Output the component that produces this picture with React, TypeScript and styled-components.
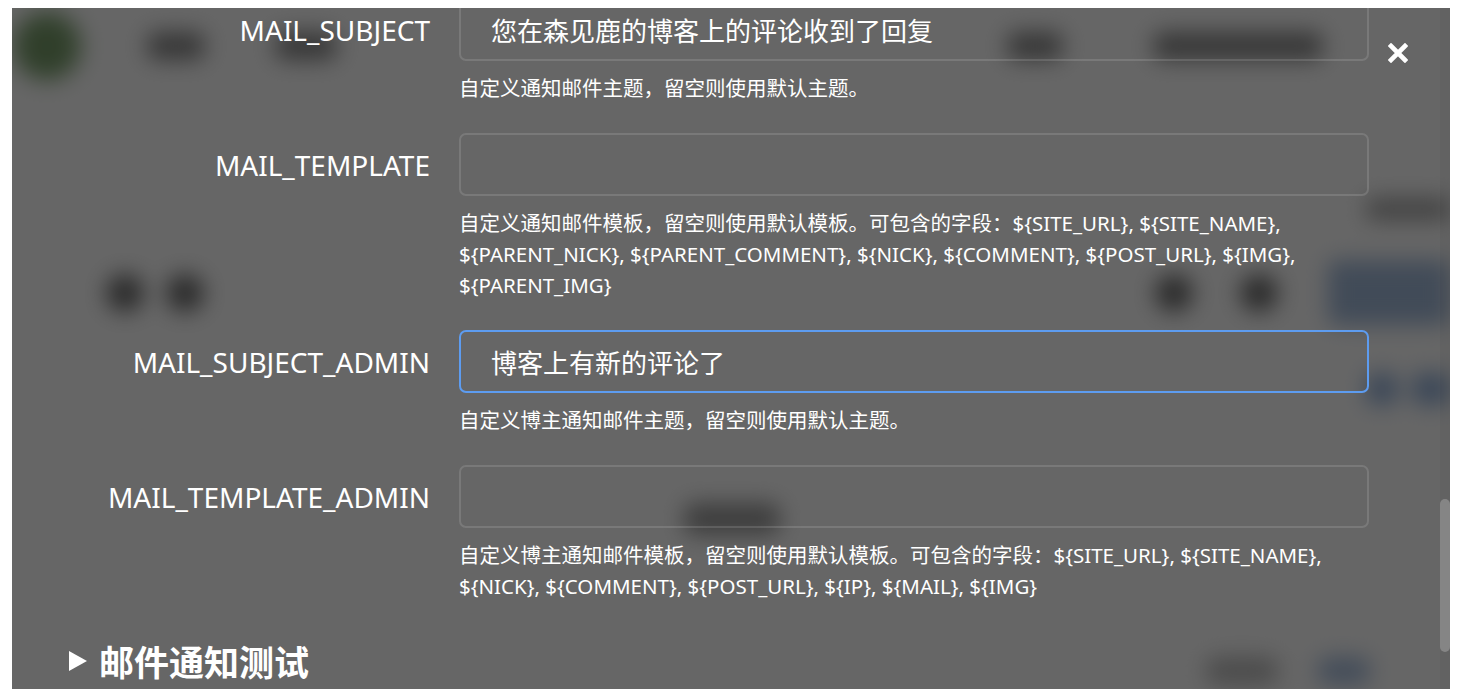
import React from "react";
import styled, { createGlobalStyle } from "styled-components";

const GlobalStyle = createGlobalStyle`
  html, body { margin: 0; padding: 0; background: #ffffff; }
  body { font-family: "Noto Sans", "Noto Sans CJK SC", sans-serif; }
  * { box-sizing: border-box; }
`;

const Frame = styled.div`
  position: relative;
  margin: 8px 0 0 12px;
  width: 1438px;
  height: 681px;
  overflow: hidden;
  background: #ffffff;
`;

/* ---------- blurred page behind the modal ---------- */
const BgPage = styled.div`
  height: 100%;
  display: flex;
  flex-direction: column;
  filter: blur(11px);
  color: #2a2a2a;
`;

const BgHeader = styled.header`
  display: flex;
  align-items: center;
  height: 76px;
  padding-left: 0;
`;

const Avatar = styled.div`
  width: 70px;
  height: 70px;
  border-radius: 50%;
  background: radial-gradient(circle at 50% 50%, #6f9560, #86a97a 65%, #a9c59e);
  flex: none;
`;

const NavItem = styled.span<{ $ml: number; $w: number }>`
  margin-left: ${(p) => p.$ml}px;
  width: ${(p) => p.$w}px;
  height: 28px;
  border-radius: 10px;
  background: #8a8a8a;
  flex: none;
`;

const MetaLine = styled.div`
  margin-top: 114px;
  align-self: flex-end;
  width: 84px;
  height: 22px;
  border-radius: 8px;
  background: #a6a6a6;
`;

const Toolbar = styled.div`
  display: flex;
  align-items: center;
  margin-top: 40px;
  height: 65px;
`;

const Dot = styled.span<{ $ml: number }>`
  margin-left: ${(p) => p.$ml}px;
  width: 38px;
  height: 38px;
  border-radius: 50%;
  background: #6e6e6e;
  flex: none;
`;

const Grow = styled.span`
  flex: 1;
`;

const BlueButton = styled.span`
  width: 122px;
  height: 65px;
  margin-left: 50px;
  border-radius: 8px;
  background: #a4bcdc;
`;

const LinkRow = styled.div`
  margin-top: 48px;
  align-self: flex-end;
  display: flex;
  gap: 14px;
`;

const BlueBlob = styled.span<{ $w: number }>`
  width: ${(p) => p.$w}px;
  height: 32px;
  border-radius: 10px;
  background: #95b3dc;
`;

const CenterBlob = styled.div`
  margin-top: 98px;
  margin-left: 672px;
  width: 96px;
  height: 32px;
  border-radius: 10px;
  background: #9a9a9a;
`;

const FooterRow = styled.div`
  margin-top: 122px;
  align-self: flex-end;
  display: flex;
  gap: 40px;
  margin-right: 80px;
`;

const GrayBlob = styled.span<{ $w: number; $blue?: boolean }>`
  width: ${(p) => p.$w}px;
  height: 28px;
  border-radius: 10px;
  background: ${(p) => (p.$blue ? "#a9c0e0" : "#bdbdbd")};
`;

/* ---------- modal ---------- */
const Overlay = styled.div`
  position: absolute;
  inset: 0;
  background: rgba(0, 0, 0, 0.6);
  overflow: hidden;
`;

const Content = styled.div`
  margin-top: -10px;
  padding-left: 56px;
  width: 1357px;
`;

const Field = styled.div`
  display: grid;
  grid-template-columns: 362px 910px;
  column-gap: 29px;
  margin-bottom: 29px;
`;

const Label = styled.label`
  grid-row: 1;
  grid-column: 1;
  align-self: center;
  justify-self: end;
  font-family: "Noto Sans", sans-serif;
  font-size: 28px;
  color: #ffffff;
  white-space: nowrap;
`;

const TextInput = styled.input<{ $focused?: boolean }>`
  grid-row: 1;
  grid-column: 2;
  height: 63px;
  width: 100%;
  border: 2px solid ${(p) => (p.$focused ? "#5d9cf0" : "rgba(255, 255, 255, 0.13)")};
  border-radius: 7px;
  background: transparent;
  color: #ffffff;
  font-family: "Noto Sans CJK SC", sans-serif;
  font-size: 26px;
  padding: 0 30px;
  outline: none;
`;

const Help = styled.p`
  grid-row: 2;
  grid-column: 2;
  margin: 12px 0 0;
  font-family: "Noto Sans", "Noto Sans CJK SC", sans-serif;
  font-size: 20.5px;
  line-height: 31px;
  color: #ffffff;
`;

const Details = styled.details`
  margin-top: 36px;
  color: #ffffff;
`;

const Summary = styled.summary`
  list-style: none;
  display: flex;
  align-items: center;
  gap: 11px;
  font-family: "Noto Sans CJK SC", sans-serif;
  font-weight: 700;
  font-size: 35px;
  line-height: 46px;
  cursor: pointer;
  &::-webkit-details-marker {
    display: none;
  }
`;

const CloseButton = styled.button`
  position: absolute;
  top: 35px;
  right: 42px;
  width: 20px;
  height: 20px;
  padding: 0;
  border: none;
  background: transparent;
  display: flex;
  align-items: center;
  justify-content: center;
  cursor: pointer;
`;

const ScrollTrack = styled.div`
  position: absolute;
  top: 0;
  right: 0;
  width: 10px;
  height: 100%;
  background: rgba(0, 0, 0, 0.04);
`;

const ScrollThumb = styled.div`
  margin-top: 491px;
  width: 10px;
  height: 153px;
  border-radius: 5px;
  background: #858585;
`;

type FieldDef = {
  name: string;
  value: string;
  focused?: boolean;
  help: string;
};

const fields: FieldDef[] = [
  {
    name: "MAIL_SUBJECT",
    value: "您在森见鹿的博客上的评论收到了回复",
    help: "自定义通知邮件主题，留空则使用默认主题。",
  },
  {
    name: "MAIL_TEMPLATE",
    value: "",
    help:
      "自定义通知邮件模板，留空则使用默认模板。可包含的字段：${SITE_URL}, ${SITE_NAME}, ${PARENT_NICK}, ${PARENT_COMMENT}, ${NICK}, ${COMMENT}, ${POST_URL}, ${IMG}, ${PARENT_IMG}",
  },
  {
    name: "MAIL_SUBJECT_ADMIN",
    value: "博客上有新的评论了",
    focused: true,
    help: "自定义博主通知邮件主题，留空则使用默认主题。",
  },
  {
    name: "MAIL_TEMPLATE_ADMIN",
    value: "",
    help:
      "自定义博主通知邮件模板，留空则使用默认模板。可包含的字段：${SITE_URL}, ${SITE_NAME}, ${NICK}, ${COMMENT}, ${POST_URL}, ${IP}, ${MAIL}, ${IMG}",
  },
];

export default function App() {
  return (
    <>
      <GlobalStyle />
      <Frame>
        <BgPage aria-hidden>
          <BgHeader>
            <Avatar />
            <NavItem $ml={65} $w={58} />
            <NavItem $ml={70} $w={62} />
            <NavItem $ml={670} $w={56} />
            <NavItem $ml={90} $w={170} />
          </BgHeader>
          <MetaLine />
          <Toolbar>
            <Dot $ml={94} />
            <Dot $ml={22} />
            <Grow />
            <Dot $ml={0} />
            <Dot $ml={47} />
            <BlueButton />
          </Toolbar>
          <LinkRow>
            <BlueBlob $w={32} />
            <BlueBlob $w={38} />
          </LinkRow>
          <CenterBlob />
          <FooterRow>
            <GrayBlob $w={72} />
            <GrayBlob $w={52} $blue />
          </FooterRow>
        </BgPage>
        <Overlay>
          <Content>
            {fields.map((f) => (
              <Field key={f.name}>
                <Label htmlFor={f.name}>{f.name}</Label>
                <TextInput id={f.name} $focused={f.focused} value={f.value} readOnly />
                <Help>{f.help}</Help>
              </Field>
            ))}
            <Details>
              <Summary>
                <svg width="20" height="22" viewBox="0 0 20 22">
                  <polygon points="1,1 19,11 1,21" fill="#ffffff" />
                </svg>
                邮件通知测试
              </Summary>
            </Details>
          </Content>
          <CloseButton aria-label="关闭">
            <svg width="20" height="20" viewBox="0 0 20 20">
              <path d="M3 3 L17 17 M17 3 L3 17" stroke="#ffffff" strokeWidth="4.6" strokeLinecap="square" />
            </svg>
          </CloseButton>
          <ScrollTrack>
            <ScrollThumb />
          </ScrollTrack>
        </Overlay>
      </Frame>
    </>
  );
}
